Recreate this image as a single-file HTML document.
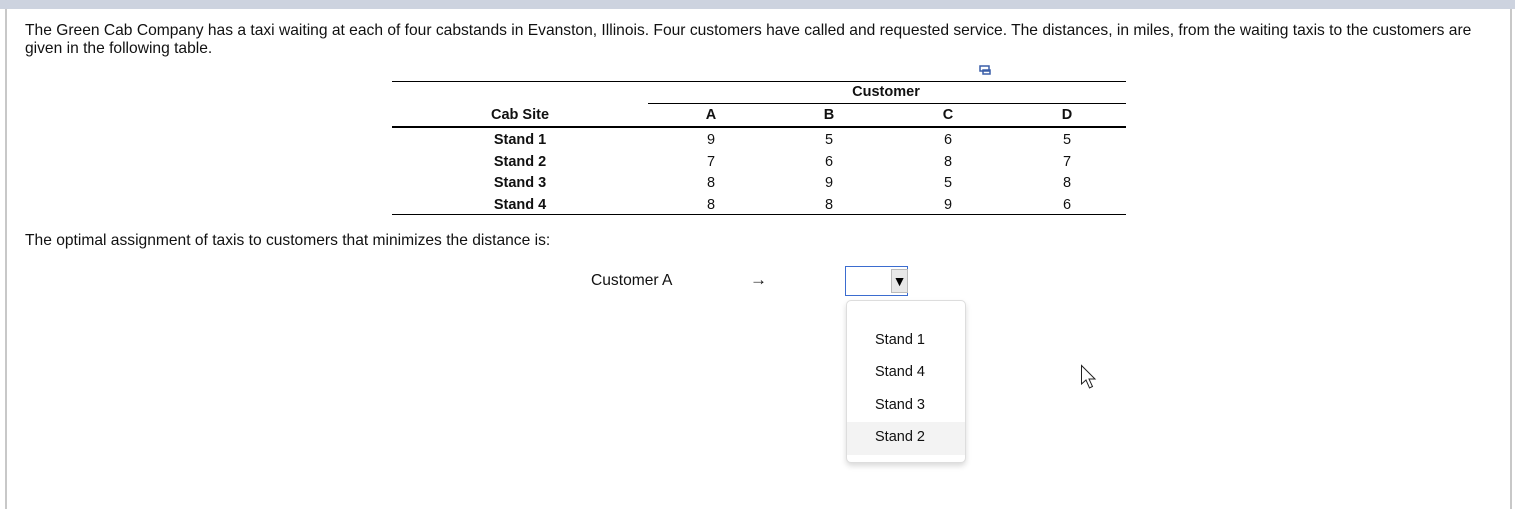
<!DOCTYPE html><html><head><style>
body{margin:0;width:1515px;height:509px;background:#fff;font-family:"Liberation Sans",sans-serif;font-size:14.5px;color:#111;position:relative;overflow:hidden}
.a{position:absolute;white-space:nowrap}
.l{position:absolute;background:#000;height:1px}
.c{position:absolute;transform:translateX(-50%);white-space:nowrap}
.b{font-weight:bold}
</style></head><body>
<div class="a" style="left:0;top:0;width:1515px;height:9px;background:#cdd3df"></div>
<div class="a" style="left:5px;top:9px;width:2px;height:500px;background:#c8c8c8"></div>
<div class="a" style="left:1510px;top:9px;width:2px;height:500px;background:#c8c8c8"></div>
<div class="a" style="left:25px;top:22px;line-height:18px;font-size:15.6px">The Green Cab Company has a taxi waiting at each of four cabstands in Evanston, Illinois. Four customers have called and requested service. The distances, in miles, from the waiting taxis to the customers are<br>given in the following table.</div>
<svg class="a" style="left:979px;top:65px" width="13" height="11"><rect x="1" y="1" width="9" height="5" fill="none" stroke="#3a5fa8" stroke-width="1.5"/><rect x="4" y="5" width="7" height="4" fill="none" stroke="#3a5fa8" stroke-width="1.5"/></svg>
<div class="l" style="left:392px;top:81px;width:734px"></div>
<div class="c b" style="left:886px;top:84px">Customer</div>
<div class="l" style="left:648px;top:103px;width:478px"></div>
<div class="l" style="left:392px;top:126px;width:734px;height:2px"></div>
<div class="l" style="left:392px;top:214px;width:734px"></div>
<div class="c b" style="left:520px;top:107px">Cab Site</div>
<div class="c b" style="left:711px;top:107px">A</div>
<div class="c b" style="left:829px;top:107px">B</div>
<div class="c b" style="left:948px;top:107px">C</div>
<div class="c b" style="left:1067px;top:107px">D</div>
<div class="c b" style="left:520px;top:130px;line-height:21.5px">Stand 1<br>Stand 2<br>Stand 3<br>Stand 4</div>
<div class="c" style="left:711px;top:130px;line-height:21.5px">9<br>7<br>8<br>8</div>
<div class="c" style="left:829px;top:130px;line-height:21.5px">5<br>6<br>9<br>8</div>
<div class="c" style="left:948px;top:130px;line-height:21.5px">6<br>8<br>5<br>9</div>
<div class="c" style="left:1067px;top:130px;line-height:21.5px">5<br>7<br>8<br>6</div>
<div class="a" style="left:25px;top:232px;font-size:15.6px">The optimal assignment of taxis to customers that minimizes the distance is:</div>
<div class="a" style="left:591px;top:272px;font-size:15.6px">Customer A</div>
<div class="a" style="left:750px;top:270px;font-size:17px">→</div>
<div class="a" style="left:845px;top:266px;width:63px;height:30px;border:1px solid #3b6ccf;box-sizing:border-box"></div>
<div class="a" style="left:891px;top:269px;width:17px;height:24px;background:#e8e8e8;border:1px solid #bbb;box-sizing:border-box;font-size:14px;text-align:center;line-height:22px;color:#000">▼</div>
<div class="a" style="left:846px;top:300px;width:118px;height:161px;border:1px solid #ddd;border-radius:5px;box-shadow:0 3px 6px rgba(0,0,0,.15);background:#fff;overflow:hidden">
<div style="position:absolute;top:121px;left:0;width:118px;height:33px;background:#f3f3f3"></div>
<div style="position:absolute;left:28px;top:23px;line-height:32.3px;font-size:14.5px">Stand 1<br>Stand 4<br>Stand 3<br>Stand 2</div></div>
<svg class="a" style="left:1080px;top:364px" width="20" height="28"><path d="M1.5 1.5V20L6 16L9.5 24L12.5 22.5L9 15H15Z" fill="#fff" stroke="#222" stroke-width="1"/></svg>
</body></html>
